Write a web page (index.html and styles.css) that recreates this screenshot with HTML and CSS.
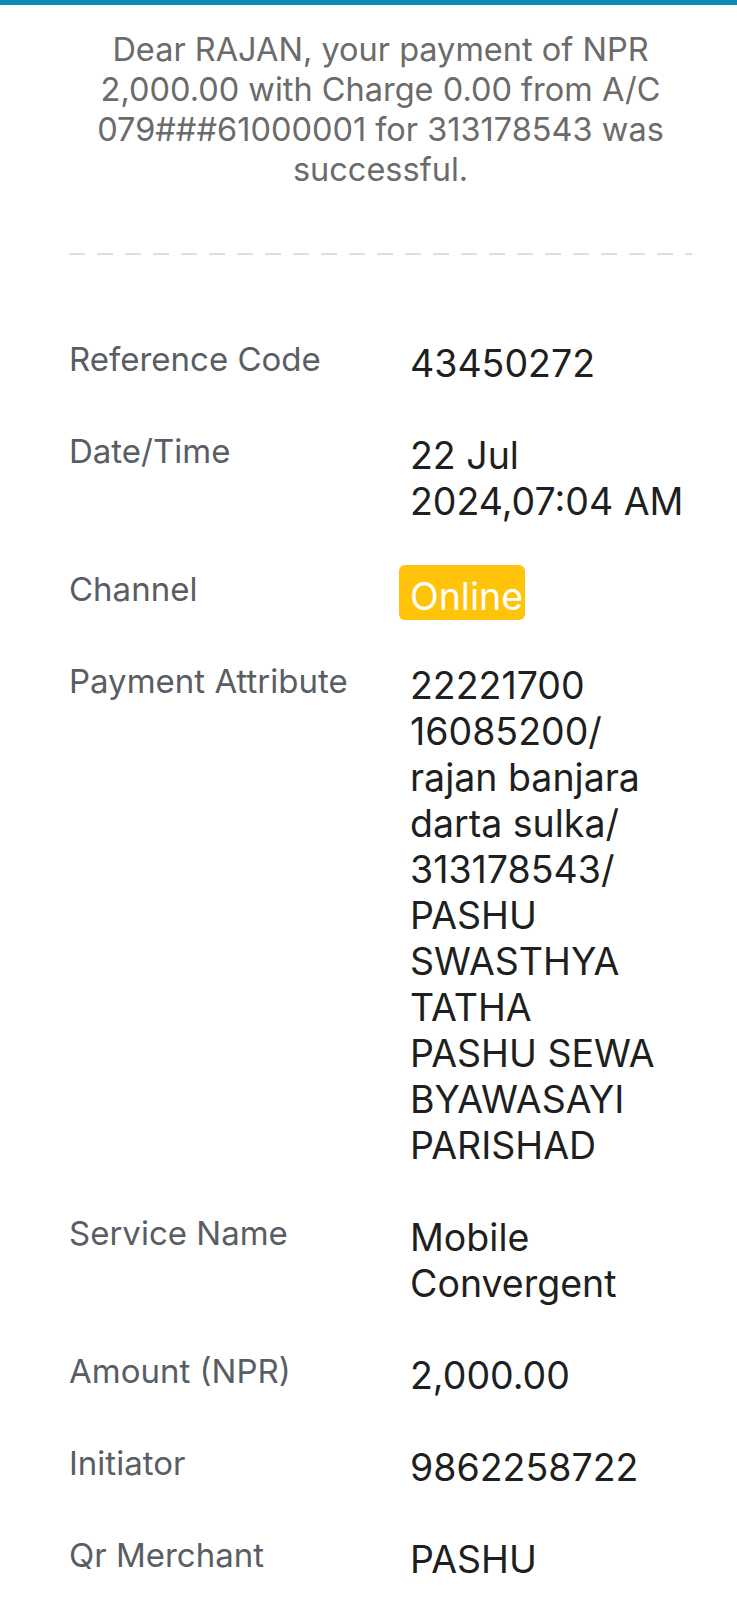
FILE: index.html
```html
<!DOCTYPE html>
<html lang="en">
<head>
<meta charset="utf-8">
<title>Payment Receipt</title>
<link rel="stylesheet" href="styles.css">
</head>
<body>
<div class="topbar"></div>
<main class="receipt">
  <p class="message">Dear RAJAN, your payment of NPR 2,000.00 with Charge 0.00 from A/C 079###61000001 for 313178543 was successful.</p>
  <div class="divider"></div>
  <dl class="details">
    <dt class="label">Reference Code</dt>
    <dd class="value">43450272</dd>

    <dt class="label">Date/Time</dt>
    <dd class="value">22 Jul 2024,07:04&nbsp;AM</dd>

    <dt class="label">Channel</dt>
    <dd class="value"><span class="badge">Online</span></dd>

    <dt class="label">Payment Attribute</dt>
    <dd class="value">22221700 16085200/<br>rajan banjara darta sulka/<wbr>313178543/<wbr>PASHU SWASTHYA TATHA<br>PASHU SEWA BYAWASAYI PARISHAD</dd>

    <dt class="label">Service Name</dt>
    <dd class="value">Mobile Convergent</dd>

    <dt class="label">Amount (NPR)</dt>
    <dd class="value">2,000.00</dd>

    <dt class="label">Initiator</dt>
    <dd class="value">9862258722</dd>

    <dt class="label">Qr Merchant</dt>
    <dd class="value">PASHU</dd>
  </dl>
</main>
</body>
</html>
```

FILE: styles.css
```css
html, body {
  margin: 0;
  padding: 0;
  background: #ffffff;
}

body {
  font-family: "Inter", "Noto Sans", "Liberation Sans", sans-serif;
  -webkit-font-smoothing: antialiased;
}

.topbar {
  height: 5px;
  background: #0b8bb7;
}

.receipt {
  padding: 0 45px 0 69px;
}

.message {
  margin: 25px 0 0;
  text-align: center;
  font-size: 32.5px;
  line-height: 40px;
  color: #6b6b6b;
}

.divider {
  margin-top: 63px;
  height: 2px;
  background-image: linear-gradient(to right, #dedede 16px, transparent 16px);
  background-size: 28px 2px;
  background-repeat: repeat-x;
}

.details {
  margin: 86px 0 0;
  display: grid;
  grid-template-columns: 341px 1fr;
  row-gap: 46px;
}

.label {
  margin: 0;
  font-size: 33px;
  line-height: 36px;
  color: #595d64;
}

.value {
  margin: 0;
  font-size: 37.5px;
  line-height: 46px;
  color: #1e1f21;
}

.badge {
  display: block;
  width: max-content;
  box-sizing: border-box;
  height: 55px;
  margin: -6px 0 -3px -11px;
  padding: 14px 2px 0 11px;
  line-height: 36px;
  background: #ffc40a;
  border-radius: 6px;
  color: #ffffff;
}
```
